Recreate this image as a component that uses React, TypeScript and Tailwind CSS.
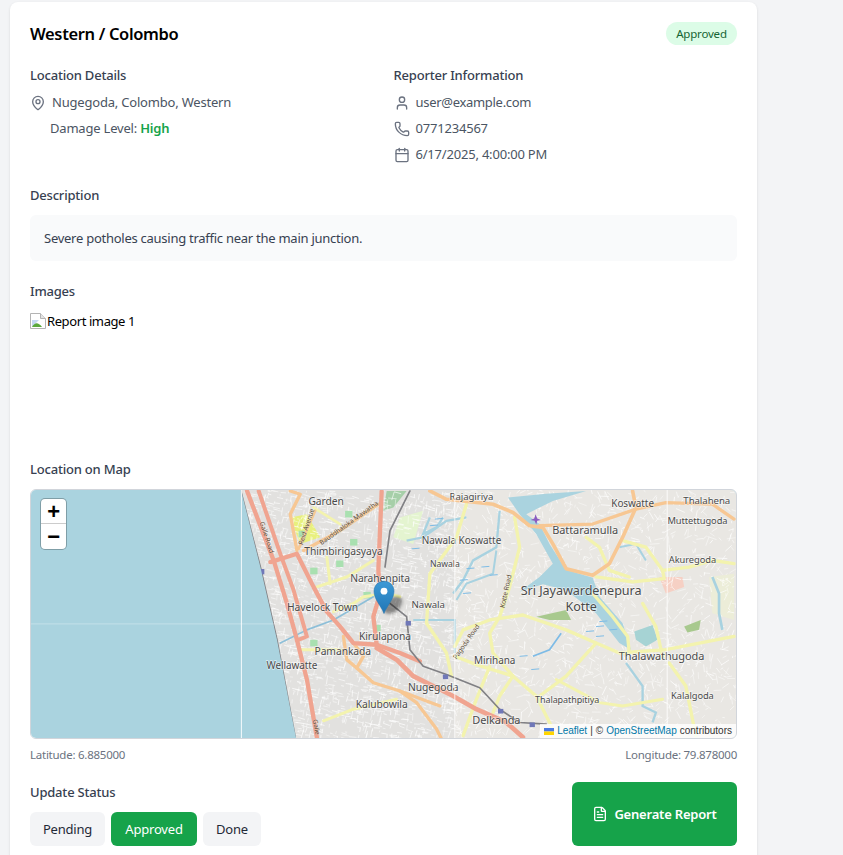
import { MapPin, User, Phone, Calendar, FileText } from "lucide-react";

const sea = "#aad3df";
const left = "translate(20 480) scale(0.33333)";
const right = "translate(380 480) scale(0.33333)";
const pts = (a: number[]) => a.join(" ");

function streets() {
  let s = 12345;
  const r = () => {
    s = (s * 16807) % 2147483647;
    return s / 2147483647;
  };
  const out: { x1: number; y1: number; x2: number; y2: number; o: number }[] = [];
  for (let i = 0; i < 3800; i++) {
    const dense = i < 2300;
    const x = dense ? 240 + r() * 220 : 450 + r() * 290;
    const y = 489 + r() * 250;
    const a = (dense ? 0.2 : r() * 3.14) + (r() < 0.6 ? 0 : 1.57) + (r() - 0.5) * 0.3;
    const l = 2 + r() * (dense ? 7 : 8);
    out.push({ x1: x, y1: y, x2: x + Math.cos(a) * l, y2: y + Math.sin(a) * l, o: 0.5 + r() * 0.5 });
  }
  return out;
}

const leftLand = "M660,20 L720,260 L770,480 L820,740 L830,790 L1300,790 L1300,20 Z";

function Road({ d, c, w, t }: { d: number[]; c: string; w: number; t: string }) {
  return <polyline transform={t} points={pts(d)} fill="none" stroke={c} strokeWidth={w} strokeLinecap="round" strokeLinejoin="round" />;
}

function Label({ x, y, s, t, tr }: { x: number; y: number; s: number; t: string; tr: string }) {
  return (
    <text transform={tr} x={x} y={y} fontSize={s} textAnchor="middle" fill="#4a4a4a" stroke="#ffffff" strokeOpacity={0.6} strokeWidth={4} paintOrder="stroke" fontFamily="Noto Sans, sans-serif">
      {t}
    </text>
  );
}

function RoadName({ x, y, r, t, tr, s = 20 }: { x: number; y: number; r: number; t: string; tr: string; s?: number }) {
  return (
    <g transform={tr}>
      <text transform={`translate(${x} ${y}) rotate(${r})`} fontSize={s} textAnchor="middle" fill="#5a4a35" stroke="#ffffff" strokeOpacity={0.35} strokeWidth={2} paintOrder="stroke" fontFamily="Noto Sans, sans-serif">
        {t}
      </text>
    </g>
  );
}

function MapDrawing() {
  const salmon = "#f0a490";
  const orange = "#f7c793";
  const yellow = "#f3f3ae";
  const gray = "#808084";
  const canal = "#a8d2e0";
  return (
    <svg viewBox="30 489 707 250" className="absolute inset-0 w-full h-full" preserveAspectRatio="none">
      <defs>
        <clipPath id="land">
          <path transform={left} d={leftLand} />
          <rect x="400" y="489" width="337" height="250" />
        </clipPath>
        <linearGradient id="pin" x1="0" y1="0" x2="0" y2="1">
          <stop offset="0" stopColor="#3d9ad6" />
          <stop offset="1" stopColor="#2076b6" />
        </linearGradient>
        <filter id="soft" x="-5%" y="-5%" width="110%" height="110%">
          <feGaussianBlur stdDeviation="0.45" />
        </filter>
        <filter id="shadow" x="-50%" y="-50%" width="200%" height="200%">
          <feGaussianBlur stdDeviation="1.6" />
        </filter>
      </defs>
      <rect x="30" y="489" width="707" height="250" fill={sea} />
      <g clipPath="url(#land)" filter="url(#soft)">
        <rect x="240" y="489" width="230" height="250" fill="#e2e1df" />
        <rect x="455" y="489" width="282" height="250" fill="#e9e7e3" />
        <polygon transform={right} points="60,110 130,90 100,190 40,170" fill="#e4f4d0" />
        <polygon transform={right} points="20,30 80,30 40,80 10,90" fill="#a6cfa8" />
        <polygon transform={left} points="810,110 860,100 900,170 840,190" fill="#e8f07e" />
        <polygon transform={right} points="990,290 1065,280 1065,420 1000,400" fill="#ecedd8" />
        <polygon transform={right} points="840,290 910,290 915,320 860,340" fill="#f6d0c4" />
        {streets().map((l, i) => (
          <line key={i} x1={l.x1} y1={l.y1} x2={l.x2} y2={l.y2} stroke="#ffffff" strokeWidth={0.75} opacity={l.o} />
        ))}
        <polygon transform={right} points="470,410 560,390 575,420 510,420" fill="#a8c98e" />
        <polygon transform={right} points="915,440 965,420 960,450 925,458" fill="#a8c98e" />
        {[
          [975, 90], [990, 175], [870, 262], [1030, 335], [870, 480], [1060, 435], [948, 240], [835, 150],
        ].map(([x, y], i) => (
          <rect key={i} transform={left} x={x} y={y} width="22" height="20" fill="#a9e0b0" />
        ))}
        <polygon
          transform={right}
          points="385,50 500,38 620,30 520,60 440,100 480,130 510,190 560,268 640,292 660,350 730,430 755,510 720,490 650,400 560,330 490,312 420,335 480,290 520,250 470,160 420,100"
          fill={sea}
        />
        <polygon transform={right} points="765,455 820,435 835,480 800,500 770,480" fill="#a6d3d4" />
        <polyline transform={right} points="80,180 130,170 200,120 260,110" fill="none" stroke={canal} strokeWidth={7} />
        <polyline transform={right} points="150,110 130,160 170,140 190,110" fill="none" stroke={canal} strokeWidth={7} />
        <polyline transform={right} points="360,90 350,200 280,240 250,300 220,340" fill="none" stroke={canal} strokeWidth={7} />
        <polyline transform={right} points="350,210 340,280 260,310 230,360" fill="none" stroke={canal} strokeWidth={6} />
        <polyline transform={right} points="100,420 225,420 225,520" fill="none" stroke={canal} strokeWidth={6} />
        <polyline transform={right} points="720,200 770,190 800,240" fill="none" stroke={canal} strokeWidth={6} />
        <polyline transform={right} points="1000,290 1020,340 1020,400 1030,450" fill="none" stroke={canal} strokeWidth={8} />
        <polyline transform={right} points="740,550 790,620 790,680 830,700 820,730" fill="none" stroke={canal} strokeWidth={7} />
        <polyline transform={right} points="460,530 510,510 545,460" fill="none" stroke="#7dbbe6" strokeWidth={5} />
        {[
          [620, 455], [660, 425], [650, 470], [690, 450], [650, 440], [165, 115],
          [150, 135], [95, 205], [240, 300], [260, 265], [305, 260], [330, 285], [250, 340], [420, 530], [455, 570],
        ].map(([x, y], i) => (
          <line key={i} transform={right} x1={x} y1={y} x2={x + 24} y2={y - 2} stroke="#7dbbe6" strokeWidth={3} />
        ))}

        <Road t={left} c={yellow} w={9} d={[920, 230, 930, 310]} />
        <Road t={left} c={yellow} w={9} d={[890, 320, 980, 290, 1060, 240]} />
        <Road t={left} c={yellow} w={9} d={[1140, 350, 1100, 340, 1030, 350, 1000, 370, 940, 395]} />
        <Road t={left} c={yellow} w={9} d={[910, 725, 1000, 690, 1130, 660]} />
        <Road t={left} c={yellow} w={9} d={[840, 510, 960, 510]} />
        <Road t={left} c={yellow} w={8} d={[880, 80, 960, 130]} />
        <Road t={left} c="#8dbfd8" w={5} d={[780, 490, 860, 450, 940, 420, 1060, 350]} />

        <Road t={right} c={yellow} w={10} d={[260, 70, 230, 170, 150, 280, 140, 430, 200, 520, 215, 590]} />
        <Road t={right} c={yellow} w={10} d={[405, 110, 420, 200, 390, 320, 360, 410, 330, 460, 340, 520, 400, 590, 470, 650, 530, 770]} />
        <Road t={right} c={yellow} w={10} d={[225, 500, 250, 450, 330, 420, 430, 405, 560, 450, 650, 490, 720, 520, 860, 510, 1065, 470]} />
        <Road t={right} c={yellow} w={10} d={[640, 340, 700, 410, 745, 470, 750, 520]} />
        <Road t={right} c={yellow} w={10} d={[730, 180, 800, 200, 850, 270, 855, 295, 760, 305, 650, 290]} />
        <Road t={right} c={yellow} w={10} d={[620, 170, 660, 200, 690, 270, 750, 290]} />
        <Road t={right} c={yellow} w={10} d={[790, 370, 830, 440, 850, 530]} />
        <Road t={right} c={yellow} w={10} d={[850, 270, 930, 260, 1000, 240, 1065, 250]} />
        <Road t={right} c={yellow} w={10} d={[650, 490, 560, 590, 480, 650]} />
        <Road t={right} c={yellow} w={10} d={[225, 530, 290, 555, 400, 590]} />
        <Road t={right} c={yellow} w={10} d={[330, 560, 290, 660, 250, 770]} />
        <Road t={right} c={yellow} w={10} d={[400, 590, 360, 650, 340, 700]} />
        <Road t={right} c={yellow} w={10} d={[870, 550, 920, 620, 950, 770]} />
        <Road t={right} c={yellow} w={9} d={[530, 600, 660, 670, 730, 680, 850, 660]} />

        <Road t={left} c={orange} w={10} d={[810, 30, 840, 40, 810, 100, 830, 210]} />
        <Road t={left} c={orange} w={10} d={[1075, 70, 960, 150, 850, 210]} />
        <Road t={left} c={orange} w={8} d={[885, 90, 835, 205]} />
        <Road t={left} c={orange} w={10} d={[970, 470, 980, 540, 1010, 565, 1030, 530, 1000, 490]} />
        <Road t={left} c={orange} w={10} d={[1010, 565, 1060, 610, 1140, 635, 1260, 680]} />
        <Road t={right} c={orange} w={10} d={[60, 635, 110, 670, 170, 750, 190, 790]} />
        <Road t={right} c={orange} w={11} d={[150, 30, 200, 55, 340, 70, 400, 95, 450, 135, 490, 140, 520, 190, 560, 265, 640, 285, 690, 250, 730, 170, 770, 80, 760, 30]} />
        <Road t={right} c={orange} w={10} d={[480, 135, 640, 130, 770, 85, 860, 65, 1000, 70, 1065, 115]} />

        <Road t={left} c={salmon} w={13} d={[680, 30, 760, 240, 800, 370, 830, 480, 860, 600, 890, 775]} />
        <Road t={left} c={salmon} w={12} d={[715, 30, 780, 220, 820, 330, 860, 470, 830, 482]} />
        <Road t={left} c={salmon} w={13} d={[750, 245, 830, 220, 880, 320, 920, 395, 960, 440, 1000, 490, 1070, 495, 1140, 520, 1200, 545]} />
        <Road t={left} c={salmon} w={13} d={[1085, 30, 1075, 270, 1080, 340, 1060, 410, 1070, 495]} />
        <Road t={right} c={salmon} w={14} d={[-10, 505, 50, 540, 100, 590, 220, 650, 290, 690, 380, 730, 430, 775]} />

        <Road t={left} c={gray} w={5} d={[660, 25, 720, 260, 770, 480, 825, 775]} />
        <Road t={right} c={gray} w={5} d={[90, 30, 30, 150, 15, 260]} />
        <Road t={right} c={gray} w={5} d={[30, 370, 80, 410, 90, 510, 130, 560, 200, 585, 300, 625, 360, 690, 420, 730, 500, 735]} />
        {[
          [85, 430], [197, 592], [363, 696], [458, 737],
        ].map(([x, y], i) => (
          <rect key={i} transform={right} x={x - 8} y={y - 7} width="16" height="14" fill="#6f78b8" />
        ))}
        <rect transform={left} x="718" y="266" width="14" height="16" fill="#6f78b8" />
        <path transform={right} d="M468,100 L473,113 L484,118 L473,120 L470,131 L465,120 L453,118 L464,113 Z" fill="#8a5cc0" />
      </g>

      <Label tr={left} x={918} y={73} s={31} t="Garden" />
      <Label tr={left} x={970} y={224} s={31} t="Thimbirigasyaya" />
      <Label tr={left} x={907} y={394} s={31} t="Havelock Town" />
      <Label tr={left} x={968} y={526} s={31} t="Pamankada" />
      <Label tr={left} x={815} y={568} s={30} t="Wellawatte" />
      <Label tr={left} x={1080} y={305} s={31} t="Narahenpita" />
      <Label tr={left} x={1095} y={481} s={31} t="Kirulapona" />
      <Label tr={left} x={1085} y={686} s={31} t="Kalubowila" />
      <Label tr={right} x={275} y={57} s={29} t="Rajagiriya" />
      <Label tr={right} x={245} y={190} s={30} t="Nawala Koswatte" />
      <Label tr={right} x={195} y={261} s={26} t="Nawala" />
      <Label tr={right} x={145} y={384} s={29} t="Nawala" />
      <Label tr={right} x={345} y={554} s={30} t="Mirihana" />
      <Label tr={right} x={160} y={635} s={31} t="Nugegoda" />
      <Label tr={right} x={350} y={736} s={33} t="Delkanda" />
      <Label tr={right} x={563} y={671} s={27} t="Thalapathpitiya" />
      <Label tr={right} x={760} y={77} s={30} t="Koswatte" />
      <Label tr={right} x={617} y={161} s={33} t="Battaramulla" />
      <Label tr={right} x={983} y={68} s={29} t="Thalahena" />
      <Label tr={right} x={955} y={131} s={28} t="Muttettugoda" />
      <Label tr={right} x={940} y={247} s={28} t="Akuregoda" />
      <Label tr={right} x={605} y={345} s={38} t="Sri Jayawardenepura" />
      <Label tr={right} x={605} y={393} s={38} t="Kotte" />
      <Label tr={right} x={847} y={542} s={33} t="Thalawathugoda" />
      <Label tr={right} x={940} y={658} s={28} t="Kalalgoda" />
      <RoadName tr={left} x={733} y={172} r={72} t="Galle Road" />
      <RoadName tr={left} x={882} y={745} r={80} t="Galle" />
      <RoadName tr={left} x={865} y={140} r={-72} t="Reid Avenue" />
      <RoadName tr={left} x={990} y={132} r={-36} t="Bauddhaloka Mawatha" />
      <RoadName tr={right} x={385} y={335} r={-78} t="Kotte Road" />
      <RoadName tr={right} x={265} y={490} r={-55} t="Pagoda Road" />

      <line x1="241" y1="489" x2="241" y2="739" stroke="#ffffff" strokeWidth="1" opacity="0.9" />
      <line x1="455" y1="489" x2="455" y2="739" stroke="#ffffff" strokeWidth="1" opacity="0.8" />
      <line x1="668" y1="489" x2="668" y2="739" stroke="#ffffff" strokeWidth="1" opacity="0.85" />
      <line x1="30" y1="624" x2="290" y2="624" stroke="#ffffff" strokeWidth="1" opacity="0.3" />

      <ellipse cx="393" cy="605" rx="11" ry="7" transform="rotate(-40 393 605)" fill="#000000" opacity="0.4" filter="url(#shadow)" />
      <path d="M384 613.5 C381.5 606 374 599.5 374 591 C374 585.2 378.4 581 384 581 C389.6 581 394 585.2 394 591 C394 599.5 386.5 606 384 613.5 Z" fill="url(#pin)" stroke="#2a78b0" strokeWidth="0.6" />
      <circle cx="384" cy="591" r="3.4" fill="#ffffff" />
    </svg>
  );
}

const Row = ({ icon, children, cls }: { icon: React.ReactNode; children: React.ReactNode; cls?: string }) => (
  <div className={`flex items-center gap-1.5 h-5 text-[13px] text-[#4b5563] ${cls ?? ""}`}>
    {icon}
    <span>{children}</span>
  </div>
);

const iconCls = "w-4 h-4 text-[#6b7280] shrink-0";
const headCls = "text-[13px] font-medium text-[#374151] leading-5";

export default function App() {
  return (
    <div className="h-[855px] overflow-hidden bg-[#f3f4f6] font-['Noto_Sans',sans-serif] tracking-[-0.2px]">
      <div className="ml-2.5 mt-0.5 w-[747px] bg-white rounded-lg shadow-sm p-5">
        <div className="flex items-center justify-between mb-5 h-[23px]">
          <h1 className="text-[16.5px] font-semibold text-black leading-7 tracking-[-0.35px]">Western / Colombo</h1>
          <span className="h-[23px] w-[71px] rounded-full bg-[#dcfce7] text-[#166534] text-[11.5px] flex items-center justify-center">Approved</span>
        </div>

        <div className="grid grid-cols-2 gap-5 mb-5">
          <div>
            <h2 className={`${headCls} mb-2`}>Location Details</h2>
            <Row cls="mb-[5px]" icon={<MapPin className={iconCls} />}>Nugegoda, Colombo, Western</Row>
            <div className="h-5 ml-5 text-[13px] leading-5 text-[#4b5563]">
              Damage Level: <span className="font-semibold text-[#16a34a]">High</span>
            </div>
          </div>
          <div>
            <h2 className={`${headCls} mb-2`}>Reporter Information</h2>
            <Row cls="mb-[5.5px] tracking-[-0.3px]" icon={<User className={iconCls} />}>user@example.com</Row>
            <Row cls="mb-[6.5px]" icon={<Phone className={iconCls} />}>0771234567</Row>
            <Row icon={<Calendar className={iconCls} />}>6/17/2025, 4:00:00 PM</Row>
          </div>
        </div>

        <h2 className={`${headCls} mb-2.5`}>Description</h2>
        <div className="bg-[#f9fafb] rounded-md px-3.5 py-3 text-[13px] leading-[22px] text-[#374151] mb-5 tracking-[-0.26px]">
          Severe potholes causing traffic near the main junction.
        </div>

        <h2 className={`${headCls} mb-2.5`}>Images</h2>
        <div className="h-32 mb-5 flex items-start text-[13px] leading-5 text-black tracking-[-0.4px]">
          <svg width="16" height="16" viewBox="0 0 16 16" className="shrink-0 mt-0.5">
            <path d="M0.5 0.5 H10.5 L15.5 5.5 V15.5 H0.5 Z" fill="#ffffff" stroke="#b4b4b4" />
            <path d="M10.5 0.5 V5.5 H15.5" fill="#e4e4e4" stroke="#b4b4b4" />
            <path d="M2 7 H9 L4 12 L2 14 Z" fill="#c3d7f2" />
            <path d="M2 14 C5 9 8 9 12 14 Z" fill="#5aa83c" />
          </svg>
          <span className="ml-px">Report image 1</span>
        </div>

        <h2 className={`${headCls} mb-2.5`}>Location on Map</h2>
        <div className="relative h-[250px] rounded-md border border-[#d1d5db] overflow-hidden">
          <MapDrawing />
          <div className="absolute left-2.5 top-[9px] w-[25px] rounded bg-white shadow-[0_0_0_1px_rgba(0,0,0,0.25)] text-black font-['Liberation_Sans',sans-serif]">
            <div className="h-[25px] flex items-center justify-center font-bold text-[22px] border-b border-[#cccccc]">+</div>
            <div className="h-[25px] flex items-center justify-center font-bold text-[22px]">−</div>
          </div>
          <div className="absolute right-0 bottom-0 h-[14px] bg-white/80 px-1 flex items-center gap-[3px] text-[10px] leading-none text-[#333333] font-['Liberation_Sans',sans-serif] tracking-normal">
            <svg width="10" height="7" viewBox="0 0 10 7" className="shrink-0">
              <rect width="10" height="3.5" fill="#4C7BE1" />
              <rect y="3.5" width="10" height="3.5" fill="#FFD500" />
            </svg>
            <span className="text-[#0078a8]">Leaflet</span>
            <span>|</span>
            <span>©</span>
            <span className="text-[#0078a8]">OpenStreetMap</span>
            <span>contributors</span>
          </div>
        </div>

        <div className="flex justify-between mt-2 text-[11.5px] leading-4 text-[#6b7280] tracking-[-0.25px]">
          <span>Latitude: 6.885000</span>
          <span>Longitude: 79.878000</span>
        </div>

        <div className="flex justify-between mt-[19px]">
          <div>
            <h2 className={`${headCls} mb-2.5`}>Update Status</h2>
            <div className="flex gap-1.5 text-[13px]">
              <button className="h-[34px] w-[75px] pt-0.5 rounded-md bg-[#f3f4f6] text-[#1f2937]">Pending</button>
              <button className="h-[34px] w-[86px] pt-0.5 rounded-md bg-[#16a34a] text-white">Approved</button>
              <button className="h-[34px] w-[58px] pt-0.5 rounded-md bg-[#f3f4f6] text-[#1f2937]">Done</button>
            </div>
          </div>
          <button className="w-[165px] h-16 rounded-md bg-[#16a34a] text-white text-[13px] font-semibold flex items-center justify-center gap-1.5">
            <FileText className="w-4 h-4" />
            <span className="pt-0.5">Generate Report</span>
          </button>
        </div>
      </div>
    </div>
  );
}
